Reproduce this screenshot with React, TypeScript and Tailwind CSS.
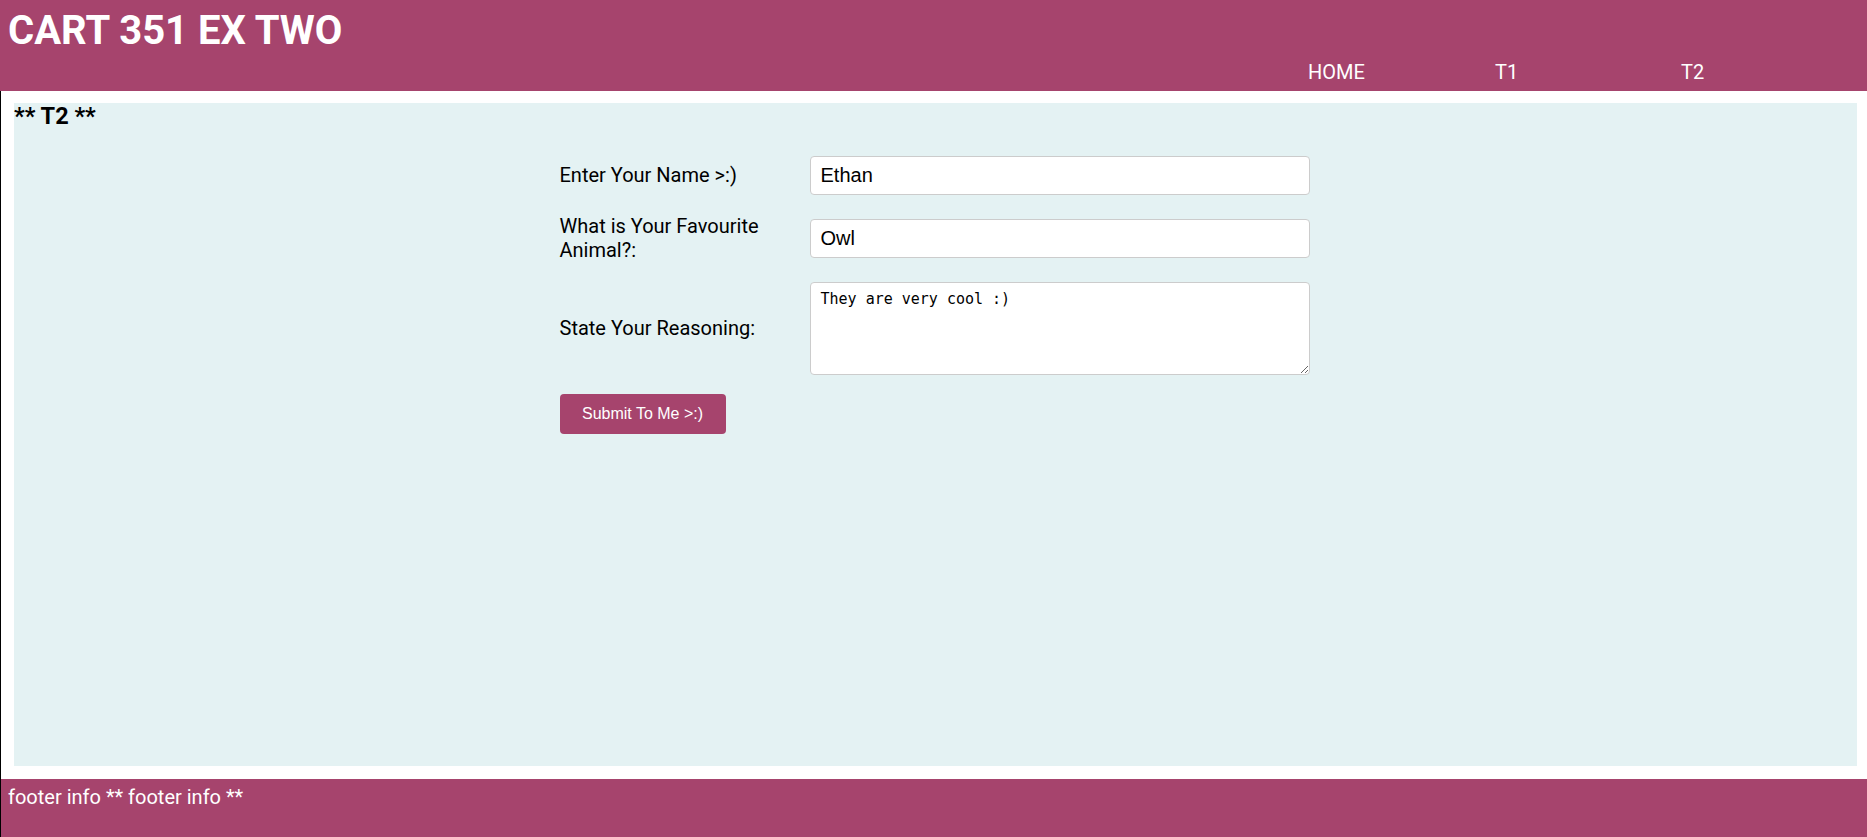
import React from "react";

export default function App() {
  return (
    <div className="w-[1867px] min-h-[837px] bg-white font-['Roboto',sans-serif] text-black">
      <header className="bg-[#a6446d] text-white pt-[7px] pb-[7px]">
        <h1 className="pl-[8px] text-[40px] font-bold leading-[47px]">CART 351 EX TWO</h1>
        <nav className="mt-[7px]">
          <ul className="flex justify-end text-[20px] leading-[23.4px]">
            <li className="w-[187px] pl-[2px]">HOME</li>
            <li className="w-[187px] pl-[2px]">T1</li>
            <li className="w-[187px] pl-[1px]">T2</li>
          </ul>
        </nav>
      </header>

      <main className="border-l border-black pl-[13px] pr-[10px] pt-[12px] pb-[13px]">
        <section className="bg-[#e4f2f3] h-[663px]">
          <h2 className="text-[23.5px] font-bold leading-[26px]">** T2 **</h2>
          <form
            className="mx-auto mt-[27px] w-[752px] grid grid-cols-[250px_502px] gap-y-[20px] items-center"
            onSubmit={(e) => e.preventDefault()}
          >
            <label className="text-[20px] leading-[23.4px]">Enter Your Name &gt;:)</label>
            <input
              type="text"
              defaultValue="Ethan"
              className="h-[39px] w-[500px] rounded-[4px] border border-[#cccccc] bg-white px-[10px] font-['Liberation_Sans',Arial,sans-serif] text-[20px] text-black outline-none"
            />

            <label className="text-[20px] leading-[23.4px]">What is Your Favourite Animal?:</label>
            <input
              type="text"
              defaultValue="Owl"
              className="h-[39px] w-[500px] rounded-[4px] border border-[#cccccc] bg-white px-[10px] font-['Liberation_Sans',Arial,sans-serif] text-[20px] text-black outline-none"
            />

            <label className="text-[20px] leading-[23.4px]">State Your Reasoning:</label>
            <textarea
              defaultValue="They are very cool :)"
              className="block h-[93px] w-[500px] rounded-[4px] border border-[#cccccc] bg-white px-[10px] pt-[8px] font-['DejaVu_Sans_Mono',monospace] text-[15px] leading-[17px] text-black outline-none"
            />

            <button
              type="submit"
              className="justify-self-start mt-[-1px] h-[40px] w-[166px] rounded-[4px] bg-[#a6446d] font-['Liberation_Sans',Arial,sans-serif] text-[16px] text-white"
            >
              Submit To Me &gt;:)
            </button>
          </form>
        </section>
      </main>

      <footer className="border-l border-black bg-[#a6446d] h-[58px] pl-[7px] pt-[7px] text-[20px] leading-[23.4px] text-white">
        footer info ** footer info **
      </footer>
    </div>
  );
}
